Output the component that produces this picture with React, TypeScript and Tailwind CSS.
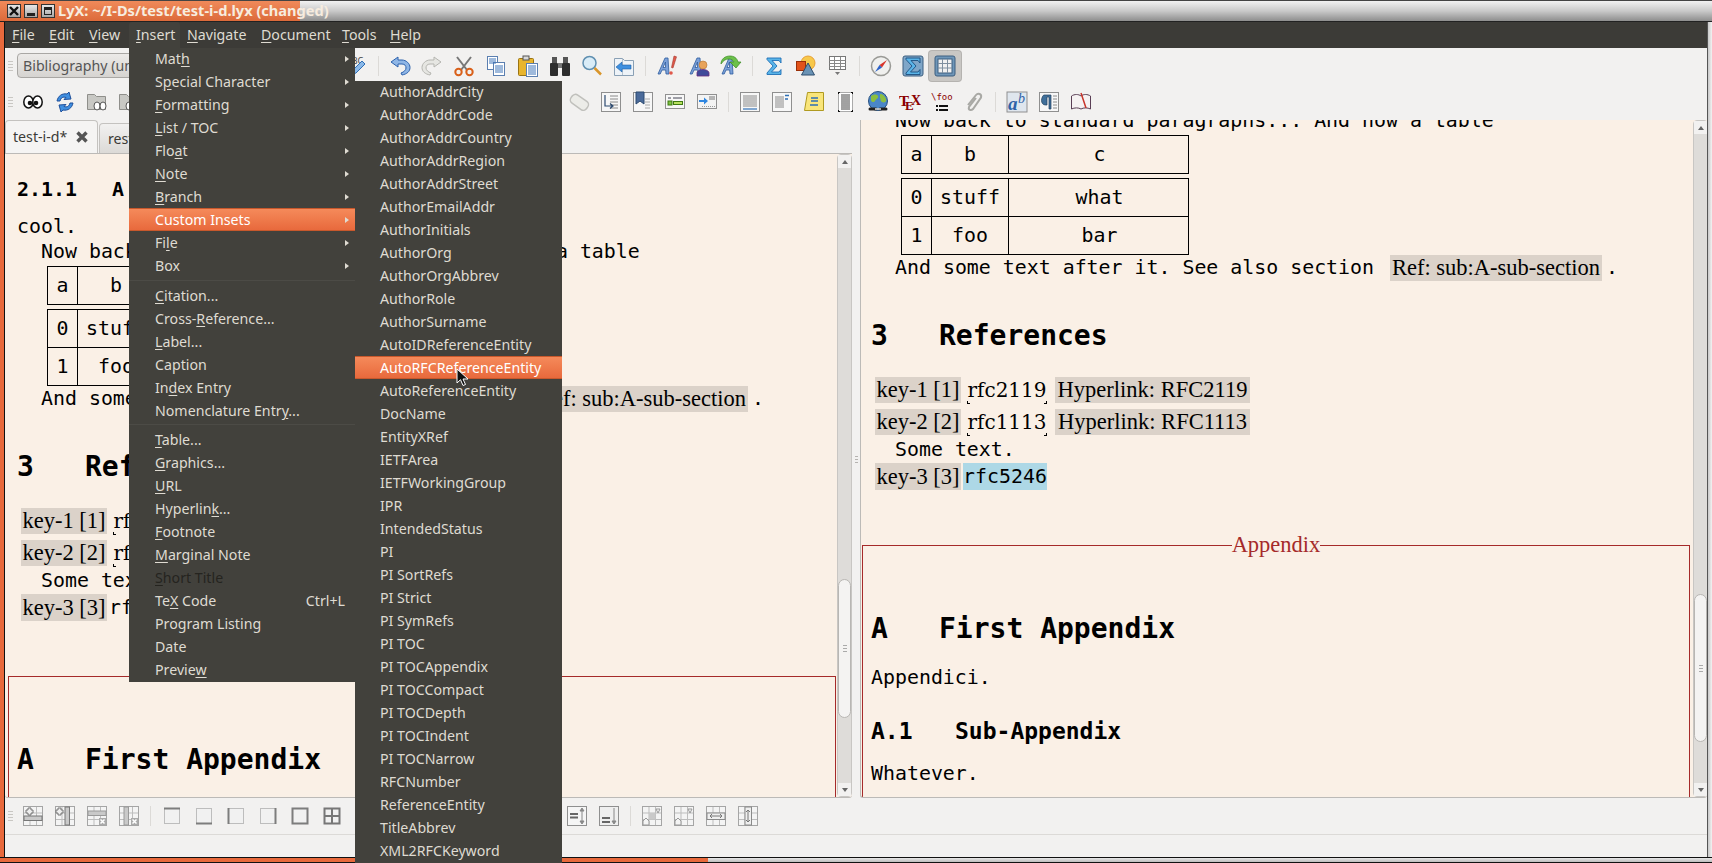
import type { ReactNode } from 'react';

const uiFont = { fontFamily: '"Noto Sans", sans-serif' };

const menuBar: [string, string][] = [
  ['File', 'w-[37px]'],
  ['Edit', 'w-[40px]'],
  ['View', 'w-[47px]'],
  ['Insert', 'w-[51px]'],
  ['Navigate', 'w-[74px]'],
  ['Document', 'w-[81px]'],
  ['Tools', 'w-[48px]'],
  ['Help', 'w-[50px]'],
];

const mainMenu: [string, number][][] = [
  [['Math', 3], ['Special Character', 1], ['Formatting', 0], ['List / TOC', 0], ['Float', 3], ['Note', 0], ['Branch', 0], ['Custom Insets', -1], ['File', 2], ['Box', -1]],
  [['Citation...', 0], ['Cross-Reference...', 6], ['Label...', 0], ['Caption', -1], ['Index Entry', 2], ['Nomenclature Entry...', 17]],
  [['Table...', 0], ['Graphics...', 0], ['URL', 0], ['Hyperlink...', 8], ['Footnote', 0], ['Marginal Note', 0], ['Short Title', 0], ['TeX Code', 2], ['Program Listing', -1], ['Date', -1], ['Preview', 6]],
];

const subMenu = [
  'AuthorAddrCity', 'AuthorAddrCode', 'AuthorAddrCountry', 'AuthorAddrRegion', 'AuthorAddrStreet', 'AuthorEmailAddr',
  'AuthorInitials', 'AuthorOrg', 'AuthorOrgAbbrev', 'AuthorRole', 'AuthorSurname', 'AutoIDReferenceEntity',
  'AutoRFCReferenceEntity', 'AutoReferenceEntity', 'DocName', 'EntityXRef', 'IETFArea', 'IETFWorkingGroup', 'IPR',
  'IntendedStatus', 'PI', 'PI SortRefs', 'PI Strict', 'PI SymRefs', 'PI TOC', 'PI TOCAppendix', 'PI TOCCompact',
  'PI TOCDepth', 'PI TOCIndent', 'PI TOCNarrow', 'RFCNumber', 'ReferenceEntity', 'TitleAbbrev', 'XML2RFCKeyword',
];

const Mnemonic = ({ label, at }: { label: string; at: number }) =>
  at < 0 ? (
    <span>{label}</span>
  ) : (
    <span>
      {label.slice(0, at)}
      <u className="underline-offset-2">{label[at]}</u>
      {label.slice(at + 1)}
    </span>
  );

const Svg = ({ children, w = 22 }: { children: ReactNode; w?: number }) => (
  <svg width={w} height="22" viewBox={`0 0 ${w} 22`} fill="none">
    {children}
  </svg>
);

const lines = (ys: number[], x1: number, x2: number, c = '#8a8a8a') =>
  ys.map((y) => <path key={y} d={`M${x1} ${y}H${x2}`} stroke={c} />);

const Page = ({ children, fill = '#f7f7f7' }: { children?: ReactNode; fill?: string }) => (
  <Svg>
    <rect x="1.5" y="1.5" width="19" height="19" fill={fill} stroke="#8f8f8f" />
    {children}
  </Svg>
);

const Grid = ({ children }: { children?: ReactNode }) => (
  <Svg>
    <rect x="1.5" y="1.5" width="19" height="19" fill="#f4f4f4" stroke="#a5a5a5" />
    <path d="M8 2v18M14.500 2v18M2 8h18M2 14.500h18" stroke="#bdbdbd" />
    {children}
  </Svg>
);

const Border = ({ d, w = 2 }: { d: string; w?: number }) => (
  <Svg>
    <rect x="3.500" y="3.500" width="15" height="15" fill="#f1f1f1" stroke="#bdbdbd" />
    <path d={d} stroke="#7d7d7d" strokeWidth={w} />
  </Svg>
);

const LetterA = () => (
  <path d="M2 19L9 3h3l1 16h-3l-.3-4H6l-1.800 4zM7 12.500h2.500L9.500 7z" fill="#7ba0d8" stroke="#2f5d9e" strokeWidth="0.8" />
);

const Sigma = ({ c = '#1f6fb5' }: { c?: string }) => (
  <path d="M4 3h14v5l-2-2.500H9l5 5.500-5.500 6H16l2-2.500v5H4v-1.500l6-7-6-6.500z" fill="#5ab4e8" stroke={c} strokeWidth="0.9" />
);

const icons: Record<string, ReactNode> = {
  spell: (
    <Svg>
      <text x="0" y="9" fontFamily='"Noto Sans", sans-serif' fontSize="9" fill="#444">ABC</text>
      <path d="M5 20l2-5 9-9 3 3-9 9z" fill="#8ab8e8" stroke="#2f6fb5" />
    </Svg>
  ),
  undo: (
    <Svg>
      <path d="M9 2L2 7l7 5V9h4c3 0 4 2 4 4s-2 4-5 5l1 2c5-1 8-3.500 8-7.500S17 5 13 5H9z" fill="#8fb6e6" stroke="#2d62ad" />
    </Svg>
  ),
  redo: (
    <Svg>
      <path d="M13 2l7 5-7 5V9H9c-3 0-4 2-4 4s2 4 5 5l-1 2c-5-1-8-3.500-8-7.500S5 5 9 5h4z" fill="#e6e6e2" stroke="#b5b5b0" />
    </Svg>
  ),
  cut: (
    <Svg>
      <path d="M4 2l10 13M18 2L8 15" stroke="#777" strokeWidth="2" />
      <circle cx="5.500" cy="17" r="3.200" stroke="#d9601a" strokeWidth="2" />
      <circle cx="16.500" cy="17" r="3.200" stroke="#d9601a" strokeWidth="2" />
    </Svg>
  ),
  copy: (
    <Svg>
      <rect x="2.500" y="1.500" width="10" height="13" fill="#fff" stroke="#5b7fb0" />
      <rect x="8.500" y="7.500" width="11" height="13" fill="#fff" stroke="#5b7fb0" />
      {lines([4, 6, 8], 4, 11, '#3f74b8')}
      {lines([11, 13, 15, 17], 10, 18, '#3f74b8')}
    </Svg>
  ),
  paste: (
    <Svg>
      <rect x="1.500" y="3.500" width="15" height="17" rx="1" fill="#e8b52e" stroke="#9a7413" />
      <rect x="6" y="1" width="6" height="4" fill="#d8d8d8" stroke="#555" />
      <rect x="9.500" y="8.500" width="11" height="13" fill="#fff" stroke="#5b7fb0" />
      {lines([11, 13, 15, 17, 19], 11, 19, '#3f74b8')}
    </Svg>
  ),
  binoculars: (
    <Svg>
      <rect x="3" y="2" width="5" height="6" fill="#555" />
      <rect x="14" y="2" width="5" height="6" fill="#555" />
      <rect x="1" y="8" width="8" height="13" rx="1" fill="#2d2d2d" />
      <rect x="13" y="8" width="8" height="13" rx="1" fill="#2d2d2d" />
      <rect x="9" y="8" width="4" height="5" fill="#777" />
    </Svg>
  ),
  search: (
    <Svg>
      <circle cx="8.500" cy="8" r="6.500" fill="#d9ecf7" stroke="#5f8fb0" strokeWidth="1.500" />
      <path d="M13.500 13l6.500 6.500" stroke="#d9952a" strokeWidth="2.500" />
    </Svg>
  ),
  backDoc: (
    <Svg>
      <path d="M1.500 3.500h8l2 2h9v15h-19z" fill="#eef3f8" stroke="#8aa0b5" />
      <path d="M9.500 4v16" stroke="#b5c3d0" />
      <path d="M3 12l6-5v3h9v4H9v3z" fill="#3d8fe0" stroke="#1f5fa5" strokeWidth="0.6" />
    </Svg>
  ),
  aBang: (
    <Svg>
      <LetterA />
      <path d="M18 1l2.500.8L17 13l-1.500-.5z" fill="#e0584a" stroke="#a3382c" strokeWidth="0.6" />
      <circle cx="15" cy="18" r="1.800" fill="#e0584a" />
    </Svg>
  ),
  aPerson: (
    <Svg>
      <LetterA />
      <circle cx="15" cy="10" r="4" fill="#e8a35a" stroke="#b5762f" strokeWidth="0.6" />
      <path d="M9 21v-3c0-2 3-3.500 6-3.500s6 1.500 6 3.500v3z" fill="#3f4a9a" stroke="#6b2f7d" strokeWidth="0.8" />
    </Svg>
  ),
  aArrow: (
    <Svg>
      <LetterA />
      <path d="M1 9c0-5 4-8 9-8 4 0 7 2 8 6h3l-5 6-6-6h4c-1-2-3-3-5-3-4 0-6 2-8 5z" fill="#6cc04a" stroke="#3a8a22" strokeWidth="0.7" />
    </Svg>
  ),
  sigma: (
    <Svg>
      <Sigma />
    </Svg>
  ),
  shapes: (
    <Svg>
      <circle cx="13" cy="8" r="7" fill="#f7c84a" stroke="#e8a035" />
      <rect x="1.500" y="6.500" width="9" height="9" fill="#e2531a" stroke="#9a2f08" />
      <path d="M13 8l6.500 12h-13z" fill="#6a93b5" stroke="#2f4f6f" />
    </Svg>
  ),
  tableDrop: (
    <Svg>
      <rect x="2.500" y="1.500" width="16" height="13" fill="#fff" stroke="#777" />
      <path d="M2.500 5.500h16M2.500 8.500h16M2.500 11.500h16M7.500 2v12M13.500 2v12" stroke="#888" />
      <path d="M8 17h5l-2.500 3z" fill="#777" />
    </Svg>
  ),
  compass: (
    <Svg>
      <circle cx="11" cy="11" r="9.500" fill="#f0f0ee" stroke="#9a9a96" strokeWidth="1.500" />
      <path d="M17 5l-5 7.500-2.500-2.500z" fill="#d9342a" />
      <path d="M5 17l4.500-7 2.500 2.500z" fill="#2d62c8" />
    </Svg>
  ),
  sigmaBox: (
    <Svg>
      <rect x="1" y="1" width="20" height="20" rx="2" fill="#7fa6c8" stroke="#3d5f80" />
      <Sigma c="#1c4f80" />
    </Svg>
  ),
  tableBox: (
    <Svg>
      <rect x="1" y="1" width="20" height="20" rx="2" fill="#6f96b8" stroke="#3d5f80" />
      <rect x="4" y="4" width="14" height="14" fill="#f1f1f1" stroke="#3d5f80" />
      <path d="M4 8.500h14M4 13h14M8.500 4v14M13.500 4v14" stroke="#7f8f9f" />
    </Svg>
  ),
  eyes: (
    <Svg>
      <ellipse cx="6.500" cy="11" rx="4.700" ry="6" fill="#fff" stroke="#111" strokeWidth="1.500" />
      <ellipse cx="15.500" cy="11" rx="4.700" ry="6" fill="#fff" stroke="#111" strokeWidth="1.500" />
      <circle cx="8" cy="12" r="2.300" fill="#111" />
      <circle cx="14" cy="12" r="2.300" fill="#111" />
    </Svg>
  ),
  refresh: (
    <Svg>
      <path d="M3 10c1-5 5-8 10-7l2-2 2 7-7 .5 2-2c-3-1-5 0-6 3.500z" fill="#3f8fe0" stroke="#1f4f9a" />
      <path d="M19 12c-1 5-5 8-10 7l-2 2-2-7 7-.5-2 2c3 1 5 0 6-3.500z" fill="#3f8fe0" stroke="#1f4f9a" />
    </Svg>
  ),
  folderEyes: (
    <Svg>
      <path d="M1.500 3.500h7l2 2h9v13h-18z" fill="#c8c8c4" stroke="#8f8f8b" />
      <ellipse cx="11" cy="15" rx="3" ry="4" fill="#fff" stroke="#555" />
      <ellipse cx="17" cy="15" rx="3" ry="4" fill="#fff" stroke="#555" />
    </Svg>
  ),
  tag: (
    <Svg>
      <rect x="2" y="6" width="19" height="10" rx="4" transform="rotate(35 11 11)" fill="#ecece8" stroke="#c0c0bc" strokeWidth="1.500" />
    </Svg>
  ),
  docArrow: (
    <Page>
      {lines([5, 8, 11, 14, 17], 10, 18)}
      <path d="M5 4v11h7M10 12.500l3 2.500-3 2.500" stroke="#2c4a70" strokeWidth="1.200" />
    </Page>
  ),
  bookmark: (
    <Page>
      {lines([8, 11, 14, 17], 13, 18, '#aaa')}
      <path d="M4 1h8v12l-4-3-4 3z" fill="#4a6a9a" stroke="#2c4a70" />
    </Page>
  ),
  greenForm: (
    <Svg>
      <rect x="1.500" y="3.500" width="19" height="14" fill="#f7f7f7" stroke="#909090" />
      <path d="M9 7h9M4 7h3" stroke="#445" />
      <rect x="4" y="10" width="4" height="4" fill="#7cc040" stroke="#3e7a10" />
      <rect x="9.500" y="10.500" width="9" height="3" fill="#b8e060" stroke="#3e7a10" />
    </Svg>
  ),
  blueForm: (
    <Svg>
      <rect x="1.500" y="3.500" width="19" height="14" fill="#f3f3f3" stroke="#909090" />
      <path d="M3 9h5V6.500L12 10l-4 3.500V11H3z" fill="#2f86e0" />
      {lines([6, 8], 13, 19, '#777')}
      <path d="M6 15.500h13" stroke="#999" strokeDasharray="1 1" />
    </Svg>
  ),
  linesDoc: (
    <Page>
      {lines([5, 7, 9, 11, 13, 15], 4, 18)}
      <path d="M4 18h14" stroke="#2f6fb5" strokeWidth="1.200" />
    </Page>
  ),
  marginDoc: (
    <Page>
      {lines([6, 8, 10, 12, 14, 16], 4, 13)}
      <path d="M14 4.500h4M14 8h3" stroke="#2f6fb5" strokeWidth="1.400" />
    </Page>
  ),
  note: (
    <Svg>
      <path d="M4.500 1.500h16v18H1.500z" fill="#f9e57a" stroke="#b09a20" />
      <path d="M8 7h7M8 10h7M7 14h8" stroke="#2f6fb5" strokeWidth="1.400" />
    </Svg>
  ),
  corners: (
    <Svg>
      <rect x="3.500" y="1.500" width="14" height="19" fill="#fff" stroke="#aaa" />
      {lines([4, 6, 8, 10, 12, 14, 16, 18], 6, 15, '#444')}
      <path d="M3 1h2v1H4v1H3zM16 1h2v2h-1V2h-1zM3 21v-2h1v1h1v1zM17 19h1v2h-2v-1h1z" fill="#111" />
    </Svg>
  ),
  globe: (
    <Svg>
      <circle cx="11" cy="10" r="9.500" fill="#4a86c8" stroke="#27507f" />
      <path d="M4 5c3-2 6-2 7 0s-2 3-3 5-4 1-4-1zM13 3c3 0 5 2 6 5s-2 4-4 3-1-3-2-4z" fill="#8cbf3f" />
      <path d="M3 18h6M13 18h6" stroke="#222" strokeWidth="3" strokeLinecap="round" />
      <path d="M8 18h6" stroke="#ddd" strokeWidth="1.500" />
    </Svg>
  ),
  tex: (
    <Svg>
      <text x="0" y="15" fontFamily='"Liberation Serif", serif' fontWeight="700" fontSize="15" fill="#8b0000">T</text>
      <text x="6" y="19" fontFamily='"Liberation Serif", serif' fontWeight="700" fontSize="13" fill="#8b0000">E</text>
      <text x="12" y="14" fontFamily='"Liberation Serif", serif' fontWeight="700" fontSize="14" fill="#8b0000">X</text>
    </Svg>
  ),
  foo: (
    <Svg>
      <text x="0" y="9" fontFamily='"DejaVu Sans Mono", monospace' fontSize="9" fill="#8b0000">\foo</text>
      <path d="M5 14h2v2H5zM5 18h2v2H5zM8 14h9v2H8zM8 18h9v2H8z" fill="#111" />
    </Svg>
  ),
  clip: (
    <Svg>
      <path d="M5 14l8-10c2-2.500 6-1 5 2.500L10 18c-2 2-5 1-4-2l7-9" stroke="#a9a9a5" strokeWidth="2" />
    </Svg>
  ),
  ab: (
    <Svg>
      <rect x="1" y="1" width="20" height="20" fill="#dfe6ee" stroke="#8f8f8f" />
      <text x="2" y="19" fontFamily='"Liberation Serif", serif' fontStyle="italic" fontWeight="700" fontSize="19" fill="#2f62a8">a</text>
      <text x="12" y="12" fontFamily='"Liberation Serif", serif' fontStyle="italic" fontSize="14" fill="#2f62a8">b</text>
    </Svg>
  ),
  para: (
    <Page>
      <path d="M6 4h7v14h-2V6H9v8H7.500C5 14 3.500 12 3.500 9.500S5 4 6 4z" fill="#3f6f9a" stroke="#23405f" strokeWidth="0.7" />
      {lines([5, 8, 11, 14, 17], 15, 19)}
    </Page>
  ),
  book: (
    <Svg>
      <path d="M1.500 5c3-2 7-2 9.500 0 2.500-2 6.500-2 9.500 0v13c-3-1.500-7-1.500-9.500 0-2.500-1.500-6.500-1.500-9.500 0z" fill="#f5f2f2" stroke="#5a3f55" />
      <path d="M11 2l5 15" stroke="#c8342a" strokeWidth="1.500" />
    </Svg>
  ),
  addRow: (
    <Grid>
      <rect x="2" y="11" width="18" height="4.500" fill="#c9c9c9" stroke="#777" />
      <path d="M4 5h2V3h3v2h2v3H9v2H6V8H4z" fill="#eee" stroke="#777" />
    </Grid>
  ),
  addCol: (
    <Grid>
      <rect x="11" y="2" width="4.500" height="18" fill="#c9c9c9" stroke="#777" />
      <path d="M2 5h2V3h3v2h2v3H7v2H4V8H2z" fill="#eee" stroke="#777" />
    </Grid>
  ),
  delRow: (
    <Grid>
      <rect x="2" y="6" width="18" height="4.500" fill="#c9c9c9" stroke="#999" />
      <rect x="13" y="13" width="7" height="7" fill="#aaa" />
      <path d="M14.500 14.500l4 4M18.500 14.500l-4 4" stroke="#fff" strokeWidth="1.500" />
    </Grid>
  ),
  delCol: (
    <Grid>
      <rect x="6" y="2" width="4.500" height="18" fill="#c9c9c9" stroke="#999" />
      <rect x="13" y="13" width="7" height="7" fill="#aaa" />
      <path d="M14.500 14.500l4 4M18.500 14.500l-4 4" stroke="#fff" strokeWidth="1.500" />
    </Grid>
  ),
  bTop: <Border d="M3 3.500h16" />,
  bBottom: <Border d="M3 18.500h16" />,
  bLeft: <Border d="M3.500 3v16" />,
  bRight: <Border d="M18.500 3v16" />,
  bOuter: <Border d="M3.500 3.500h15v15h-15z" />,
  bAll: (
    <Svg>
      <rect x="3.500" y="3.500" width="15" height="15" fill="#f1f1f1" stroke="#777" strokeWidth="2" />
      <path d="M11 3v16M3 11h16" stroke="#777" strokeWidth="2" />
    </Svg>
  ),
  alignMid: (
    <Page fill="#f5f5f5">
      <path d="M4 9h8M4 12.500h8" stroke="#666" strokeWidth="2" />
      <path d="M16 3l2 3h-4zM16 19l2-3h-4zM16 5v12" stroke="#888" fill="#888" />
    </Page>
  ),
  alignBot: (
    <Page fill="#efefef">
      <path d="M4 13h8M4 17h8" stroke="#666" strokeWidth="2" />
      <path d="M16 3v15M14 16l2 3 2-3z" stroke="#888" fill="#888" />
    </Page>
  ),
  multi: (
    <Grid>
      <rect x="8" y="8" width="6.500" height="6.500" fill="#c9c9c9" />
      <path d="M15 4h4l-2 4zM2 16l3-3 3 3v4H2z" fill="#f4f4f4" stroke="#999" />
    </Grid>
  ),
  multi2: (
    <Grid>
      <path d="M15 4h4l-2 4zM2 16l3-3 3 3v4H2z" fill="#f4f4f4" stroke="#999" />
    </Grid>
  ),
  spanH: (
    <Grid>
      <rect x="2" y="8" width="18" height="6.500" fill="#efefef" stroke="#8a8a8a" />
      <path d="M5 11h12M5 11l2-2M5 11l2 2M17 11l-2-2M17 11l-2 2" stroke="#777" />
    </Grid>
  ),
  spanV: (
    <Grid>
      <rect x="8" y="2" width="6.500" height="18" fill="#efefef" stroke="#8a8a8a" />
      <path d="M11 5v12M11 5L9 7M11 5l2 2M11 17l-2-2M11 17l2-2" stroke="#777" />
    </Grid>
  ),
};

const Tool = ({ name, active }: { name: string; active?: boolean }) => (
  <div className={`flex h-[30px] w-[32px] shrink-0 items-center justify-center rounded-[3px] ${active ? 'bg-[#c9c7c4] ring-1 ring-[#b5b3b0]' : ''}`}>
    {icons[name]}
  </div>
);

const Sep = () => (
  <div className="flex w-[11px] shrink-0 justify-center">
    <div className="h-[20px] w-px bg-[#dcdad7]" />
  </div>
);

const Handle = () => (
  <div className="flex w-[9px] shrink-0 flex-col items-start gap-[2px]">
    <div className="h-px w-[5px] bg-[#c9c7c3]" />
    <div className="h-px w-[5px] bg-[#c9c7c3]" />
    <div className="h-px w-[5px] bg-[#c9c7c3]" />
    <div className="h-px w-[5px] bg-[#c9c7c3]" />
  </div>
);

const Tools = ({ names }: { names: string[] }) => (
  <>
    {names.map((n, i) => (n === '|' ? <Sep key={i} /> : <Tool key={i} name={n} active={n === 'tableBox'} />))}
  </>
);

const TitleButton = ({ children }: { children: ReactNode }) => (
  <div className="flex h-[14px] w-[14px] shrink-0 items-center justify-center border border-[#333] bg-gradient-to-b from-[#e8e8e8] to-[#a8a8a8]">
    {children}
  </div>
);

const Mono = ({ className = '', children }: { className?: string; children: ReactNode }) => (
  <div className={`flex items-center whitespace-pre font-['DejaVu_Sans_Mono',monospace] text-[19.900px] text-black ${className}`}>
    {children}
  </div>
);

const Chip = ({ w, children }: { w: string; children: ReactNode }) => (
  <span className={`flex h-full shrink-0 items-center justify-center whitespace-pre bg-[#dbd2c9] ${w}`}>{children}</span>
);

const Cited = ({ children }: { children: ReactNode }) => (
  <span className="relative mr-[2px] flex h-full w-[80px] shrink-0 items-center justify-center font-['DejaVu_Serif',serif] text-[20px]">
    {children}
    <span className="absolute -bottom-px left-0 h-[3px] w-[3px] border-b border-l border-black" />
    <span className="absolute -bottom-px right-0 h-[3px] w-[3px] border-b border-r border-black" />
  </span>
);

const cellRow = "grid h-[38px] grid-cols-[30px_77px_181px] border-x border-b border-black font-['DejaVu_Sans_Mono',monospace] text-[19.900px] text-black";
const cell = 'flex items-center justify-center';

const Body = ({ selected }: { selected?: boolean }) => (
  <>
    <Mono className="ml-[35px] h-[24px]">Now back to standard paragraphs... And now a table</Mono>
    <div className="ml-[41px] mt-[2px] w-[288px] border-t border-black">
      <div className={cellRow}>
        <span className={`${cell} border-r border-black`}>a</span>
        <span className={`${cell} border-r border-black`}>b</span>
        <span className={cell}>c</span>
      </div>
    </div>
    <div className="ml-[41px] mt-[4px] w-[288px] border-t border-black">
      <div className={cellRow}>
        <span className={`${cell} border-r border-black`}>0</span>
        <span className={`${cell} border-r border-black`}>stuff</span>
        <span className={cell}>what</span>
      </div>
      <div className={cellRow}>
        <span className={`${cell} border-r border-black`}>1</span>
        <span className={`${cell} border-r border-black`}>foo</span>
        <span className={cell}>bar</span>
      </div>
    </div>
    <Mono className="ml-[35px] mt-px h-[24px]">
      And some text after it. See also section
      <span className="ml-[16px] flex h-[26px] w-[212px] items-center justify-center bg-[#dbd2c9] font-['Liberation_Serif',serif] text-[22.500px]">
        Ref: sub:A-sub-section
      </span>
      <span className="ml-[4px]">.</span>
    </Mono>
    <Mono className="ml-[11px] mt-[35px] h-[40px] pt-[2px] text-[28px] font-bold">
      <span className="w-[68px]">3</span>References
    </Mono>
    <div className="ml-[15px] mt-[22px] flex h-[26px] gap-[6px] font-['Liberation_Serif',serif] text-[22.500px] text-black">
      <Chip w="w-[86px]">key-1 [1]</Chip>
      <Cited>rfc2119</Cited>
      <Chip w="w-[195px]">Hyperlink: RFC2119</Chip>
    </div>
    <div className="ml-[15px] mt-[6px] flex h-[26px] gap-[6px] font-['Liberation_Serif',serif] text-[22.500px] text-black">
      <Chip w="w-[86px]">key-2 [2]</Chip>
      <Cited>rfc1113</Cited>
      <Chip w="w-[195px]">Hyperlink: RFC1113</Chip>
    </div>
    <Mono className="ml-[35px] mt-[3px] h-[24px]">Some text.</Mono>
    <div className="ml-[15px] mt-px flex h-[27px] gap-[2px] font-['Liberation_Serif',serif] text-[22.500px] text-black">
      <Chip w="w-[86px]">key-3 [3]</Chip>
      <Mono className={`h-full w-[84px] justify-center ${selected ? 'bg-[#add8e6]' : ''}`}>rfc5246</Mono>
    </div>
    <div className="ml-[2px] mt-[55px] h-[400px] w-[828px] border-x border-[#a52a2a]">
      <div className="flex h-0 items-center">
        <div className="h-px flex-1 bg-[#a52a2a]" />
        <span className="font-['Liberation_Serif',serif] text-[22.500px] text-[#a52a2a]">Appendix</span>
        <div className="h-px flex-1 bg-[#a52a2a]" />
      </div>
      <Mono className="ml-[8px] mt-[63px] h-[40px] pt-[2px] text-[28px] font-bold">
        <span className="w-[68px]">A</span>First Appendix
      </Mono>
      <Mono className="ml-[8px] mt-[18px] h-[24px]">Appendici.</Mono>
      <Mono className="ml-[8px] mt-[23px] h-[36px] text-[23px] font-bold">
        <span className="w-[84px]">A.1</span>Sub-Appendix
      </Mono>
      <Mono className="ml-[8px] mt-[13px] h-[24px]">Whatever.</Mono>
    </div>
  </>
);

const Arrow = ({ up }: { up?: boolean }) => (
  <div className={`h-0 w-0 border-x-[3px] border-x-transparent ${up ? 'border-b-[4px] border-b-[#666]' : 'border-t-[4px] border-t-[#666]'}`} />
);

const Scrollbar = ({ before, thumb }: { before: string; thumb: string }) => (
  <div className="flex h-full w-[15px] shrink-0 flex-col items-center rounded-[4px] border border-[#c8c6c3] bg-[#dedcd9]">
    <div className="flex h-[13px] w-full shrink-0 items-center justify-center bg-[#f2f1f0]">
      <Arrow up />
    </div>
    <div className={`shrink-0 ${before}`} />
    <div className={`flex w-[13px] shrink-0 flex-col items-center justify-center gap-[2px] rounded-[7px] border border-[#b8b6b3] bg-[#f4f3f2] ${thumb}`}>
      <div className="h-px w-[4px] bg-[#aaa]" />
      <div className="h-px w-[4px] bg-[#aaa]" />
      <div className="h-px w-[4px] bg-[#aaa]" />
    </div>
    <div className="flex-1" />
    <div className="flex h-[13px] w-full shrink-0 items-center justify-center bg-[#f2f1f0]">
      <Arrow />
    </div>
  </div>
);

export default function App() {
  return (
    <div className="relative h-[863px] w-[1712px] overflow-hidden bg-[#f2f1f0]" style={uiFont}>
      {/* title bar */}
      <div className="flex h-[22px] border-y border-y-[#222] border-t-[#444] bg-gradient-to-b from-[#f2f2f2] via-[#c9c9c9] to-[#8e8e8e]">
        <div className="flex h-full w-[300px] shrink-0 items-center gap-[3px] overflow-visible whitespace-nowrap bg-gradient-to-b from-[#f08a5a] to-[#dc6a3a] pl-[7px]">
          <TitleButton>
            <svg width="10" height="10" viewBox="0 0 10 10"><path d="M1 1l8 8M9 1l-8 8" stroke="#111" strokeWidth="2.400" /></svg>
          </TitleButton>
          <TitleButton>
            <div className="mt-[6px] h-[3px] w-[8px] bg-[#222]" />
          </TitleButton>
          <TitleButton>
            <div className="h-[8px] w-[8px] border border-t-[3px] border-[#222]" />
          </TitleButton>
          <span className="text-[14.600px] font-bold text-[#f7ecdf]">LyX: ~/I-Ds/test/test-i-d.lyx (changed)</span>
        </div>
      </div>

      <div className="flex h-[835px]">
        <div className="w-[4px] shrink-0 bg-[#e8693c]" />
        <div className="flex w-[1704px] shrink-0 flex-col border-l border-r border-[#111] border-r-[#555]">
          {/* menu bar */}
          <div className="flex h-[26px] shrink-0 items-center bg-[#3c3b37] text-[14.200px] text-[#dfdbd2]">
            {menuBar.map(([m, w]) => (
              <div key={m} className={`flex h-full shrink-0 items-center pl-[7px] ${w} ${m === 'Insert' ? 'rounded-t-[3px] bg-[#42413c]' : ''}`}>
                <Mnemonic label={m} at={0} />
              </div>
            ))}
          </div>

          {/* toolbars */}
          <div className="flex h-[35px] shrink-0 items-center pl-[3px]">
            <Handle />
            <div className="flex h-[25px] w-[324px] shrink-0 items-center rounded-[4px] border border-[#a9a7a4] bg-gradient-to-b from-[#eceae8] to-[#d6d4d1] pl-[5px] text-[14.200px] text-[#555]">
              Bibliography (unnumbered)
            </div>
            <Tools names={['spell', '|', 'undo', 'redo', 'cut', 'copy', 'paste', 'binoculars', 'search', 'backDoc', '|', 'aBang', 'aPerson', 'aArrow', '|', 'sigma', 'shapes', 'tableDrop', '|', 'compass', 'sigmaBox', 'tableBox']} />
          </div>
          <div className="flex h-[37px] shrink-0 items-center pl-[3px]">
            <Handle />
            <Tools names={['eyes', 'refresh', 'folderEyes', 'folderEyes']} />
            <div className="w-[418px] shrink-0" />
            <Tools names={['tag', 'docArrow', 'bookmark', 'greenForm', 'blueForm', '|', 'linesDoc', 'marginDoc', 'note', 'corners', 'globe', 'tex', 'foo', 'clip', '|', 'ab', 'para', 'book']} />
          </div>

          {/* work area */}
          <div className="flex h-[678px] shrink-0">
            <div className="flex w-[847px] shrink-0 flex-col">
              <div className="flex h-[33px] shrink-0 items-end text-[14.200px] text-[#3c3b37]">
                <div className="flex h-[33px] w-[93px] shrink-0 items-center gap-[8px] rounded-t-[4px] border border-b-0 border-[#c4c2bf] bg-[#f5f4f3] pl-[7px]">
                  test-i-d*
                  <svg width="14" height="14" viewBox="0 0 14 14"><path d="M2.500 2.500l9 9M11.500 2.500l-9 9" stroke="#555" strokeWidth="3.400" /></svg>
                </div>
                <div className="ml-px flex h-[30px] w-[100px] shrink-0 items-center rounded-t-[4px] border border-b-0 border-[#c4c2bf] bg-gradient-to-b from-[#f2f1f0] to-[#dcdad7] pl-[8px]">
                  rest
                </div>
              </div>
              <div className="flex h-[645px] shrink-0 overflow-hidden rounded-b-[3px] border-t border-b border-[#bcbab7] bg-[#faf0e6]">
                <div className="h-[900px] w-[832px] shrink-0 overflow-hidden pl-px">
                  <Mono className="ml-[11px] mt-[20px] h-[32px] font-bold">
                    <span className="w-[95px]">2.1.1</span>A sub-section
                  </Mono>
                  <Mono className="ml-[11px] mt-[9px] h-[24px]">cool.</Mono>
                  <div className="mt-[1px]">
                    <Body />
                  </div>
                </div>
                <Scrollbar before="h-[411px]" thumb="h-[139px]" />
              </div>
            </div>
            <div className="flex w-[8px] shrink-0 flex-col items-center justify-center gap-[2px]">
              <div className="h-px w-[3px] bg-[#b5b3b0]" />
              <div className="h-px w-[3px] bg-[#b5b3b0]" />
              <div className="h-px w-[3px] bg-[#b5b3b0]" />
            </div>
            <div className="flex h-full w-[847px] shrink-0 overflow-hidden rounded-b-[3px] border-b border-l border-[#bcbab7] bg-[#faf0e6]">
              <div className="-ml-px h-[900px] w-[833px] shrink-0 overflow-hidden">
                <div className="-mt-[11px]">
                  <Body selected />
                </div>
              </div>
              <Scrollbar before="h-[460px]" thumb="h-[148px]" />
            </div>
          </div>

          {/* bottom toolbar and status bar */}
          <div className="flex h-[37px] shrink-0 items-center border-b border-[#dcdad7] pl-[3px]">
            <Handle />
            <Tools names={['addRow', 'addCol', 'delRow', 'delCol', '|', 'bTop', 'bBottom', 'bLeft', 'bRight', 'bOuter', 'bAll']} />
            <div className="w-[213px] shrink-0" />
            <Tools names={['alignMid', 'alignBot', '|', 'multi', 'multi2', 'spanH', 'spanV']} />
          </div>
          <div className="flex-1" />
        </div>
        <div className="w-[4px] shrink-0 bg-gradient-to-r from-[#c9c9c9] to-[#f2f2f2]" />
      </div>

      <div className="flex h-[6px] border-y border-[#111]">
        <div className="w-[708px] shrink-0 bg-[#e8693c]" />
        <div className="flex-1 bg-gradient-to-b from-[#e8e8e8] to-[#bdbdbd]" />
      </div>

      {/* open Insert menu */}
      <div className="absolute left-[129px] top-[48px] h-[634px] w-[226px] overflow-hidden bg-[#42413c] text-[14.200px] text-[#dfdbd2]">
        <div className="-mt-px">
          {mainMenu.map((group, g) => (
            <div key={g} className={g === 1 ? 'mt-[3px] border-t border-[#4c4b46] pt-[3px]' : g === 2 ? 'mt-[2px] border-t border-[#4c4b46] pt-[3px]' : ''}>
              {group.map(([label, at]) => {
                const active = label === 'Custom Insets';
                const disabled = label === 'Short Title';
                return (
                  <div
                    key={label}
                    className={`flex h-[23px] items-center pl-[26px] pr-[6px] ${active ? 'border-y border-[#c8582c] bg-gradient-to-b from-[#f58a5a] to-[#e8693c] text-white' : ''} ${disabled ? 'text-[#25241f]' : ''}`}
                  >
                    <span className="flex-1">
                      <Mnemonic label={label} at={at} />
                    </span>
                    {label === 'TeX Code' && <span className="pr-[4px]">Ctrl+L</span>}
                    {g === 0 && <div className="h-0 w-0 border-y-[3px] border-l-[4px] border-y-transparent border-l-[#dfdbd2]" />}
                  </div>
                );
              })}
            </div>
          ))}
        </div>
      </div>

      {/* Custom Insets submenu */}
      <div className="absolute left-[355px] top-[81px] h-[782px] w-[207px] overflow-hidden bg-[#42413c] text-[14.200px] text-[#dfdbd2]">
        <div className="-mt-px">
          {subMenu.map((s) => (
            <div
              key={s}
              className={`flex h-[23px] items-center pl-[25px] ${s === 'AutoRFCReferenceEntity' ? 'border-y border-[#c8582c] bg-gradient-to-b from-[#f58a5a] to-[#e8693c] text-white' : ''}`}
            >
              {s}
            </div>
          ))}
        </div>
      </div>

      {/* mouse pointer */}
      <svg className="absolute left-[456px] top-[368px]" width="13" height="19" viewBox="0 0 13 19">
        <path d="M1 1v14l3.500-3.300L7 17.500l2.500-1-2.500-5.500h5z" fill="#111" stroke="#fff" />
      </svg>
    </div>
  );
}
